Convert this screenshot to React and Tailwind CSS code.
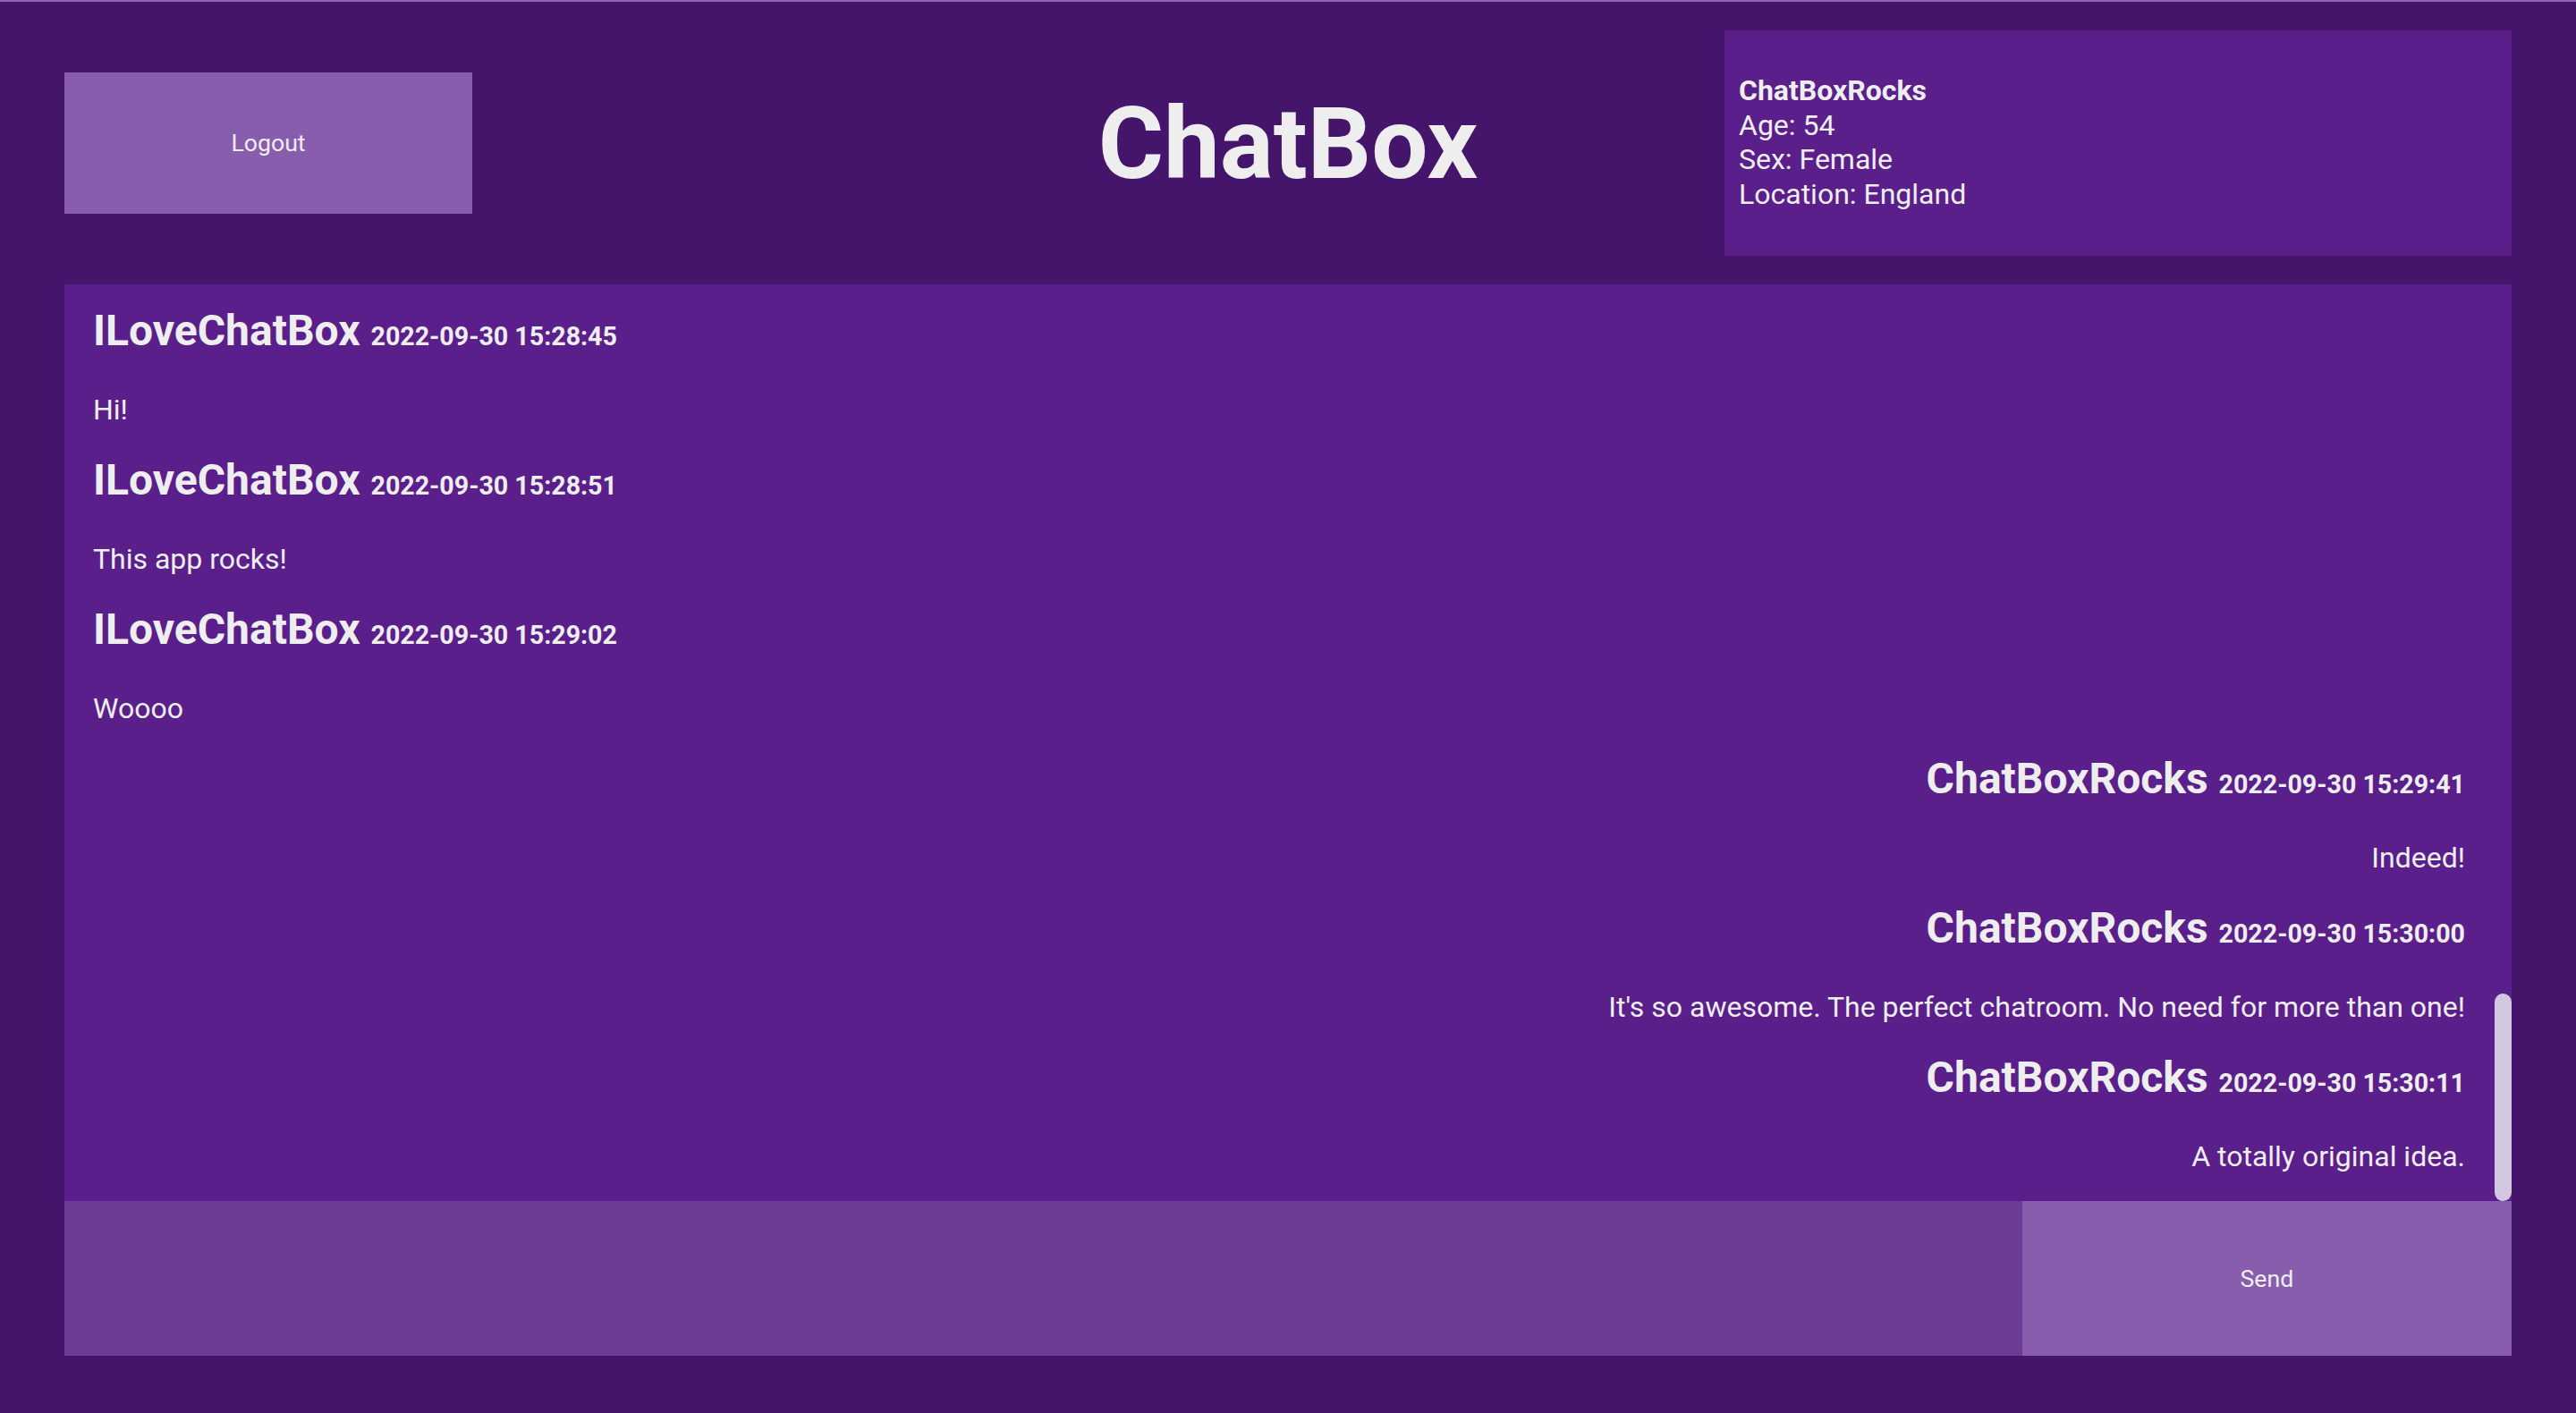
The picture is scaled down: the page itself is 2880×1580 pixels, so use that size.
import React, { useState } from 'react';

const messages = [
  { user: 'ILoveChatBox', time: '2022-09-30 15:28:45', text: 'Hi!', mine: false },
  { user: 'ILoveChatBox', time: '2022-09-30 15:28:51', text: 'This app rocks!', mine: false },
  { user: 'ILoveChatBox', time: '2022-09-30 15:29:02', text: 'Woooo', mine: false },
  { user: 'ChatBoxRocks', time: '2022-09-30 15:29:41', text: 'Indeed!', mine: true },
  { user: 'ChatBoxRocks', time: '2022-09-30 15:30:00', text: "It's so awesome. The perfect chatroom. No need for more than one!", mine: true },
  { user: 'ChatBoxRocks', time: '2022-09-30 15:30:11', text: 'A totally original idea.', mine: true },
];

const Message = ({ user, time, text, mine }) => (
  <div className={mine ? 'text-right' : 'text-left'}>
    <h2 className="text-[48px] leading-[56px] font-bold whitespace-nowrap">
      {user} <span className="text-[28.6px] leading-none">{time}</span>
    </h2>
    <p className="mt-[41px] mb-[32px] text-[32px] leading-[38px]">{text}</p>
  </div>
);

const App = () => {
  const [draft, setDraft] = useState('');

  return (
    <div
      className="min-h-screen bg-[#45156c] border-t-2 border-[#8a69b0] px-[72px] pt-[32px] pb-[64px] text-[#eeeeee]"
      style={{ fontFamily: 'Roboto, "Liberation Sans", sans-serif' }}
    >
      <header className="grid grid-cols-3 items-center h-[252px]">
        <button className="justify-self-start w-[456px] h-[158px] bg-[#885dad] text-[26.67px] text-[#eeeeee]">
          Logout
        </button>
        <h1 className="justify-self-center text-[112px] leading-[131px] font-bold">ChatBox</h1>
        <div className="justify-self-end w-[880px] h-[252px] bg-[#5a1f8b] px-[16px] pb-[2px] flex flex-col justify-center text-[32px] leading-[38.5px]">
          <span className="font-bold">ChatBoxRocks</span>
          <span>Age: 54</span>
          <span>Sex: Female</span>
          <span>Location: England</span>
        </div>
      </header>

      <main className="mt-[32px]">
        <div className="relative h-[1025px] bg-[#5a1f8b] overflow-hidden pt-[24px] pl-[32px] pr-[52px]">
          {messages.map((m, i) => (
            <Message key={i} {...m} />
          ))}
          <div className="absolute right-0 bottom-0 w-[19px] h-[232px] rounded-full bg-[#d4c8e0]" />
        </div>

        <div className="flex h-[173px]">
          <textarea
            className="w-4/5 h-full bg-[#6d3b96] resize-none outline-none p-4 text-[32px]"
            value={draft}
            onChange={(e) => setDraft(e.target.value)}
          />
          <button className="w-1/5 h-full bg-[#885dad] text-[26.67px] text-[#eeeeee]">Send</button>
        </div>
      </main>
    </div>
  );
};

export default App;
